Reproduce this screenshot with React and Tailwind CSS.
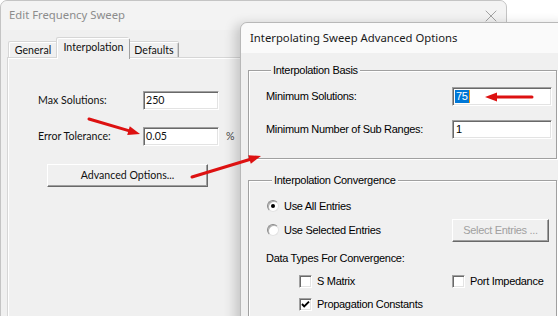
import React from "react";
import { X } from "lucide-react";

const sunken =
    "bg-white border border-t-[#a0a0a0] border-l-[#a0a0a0] border-b-white border-r-white shadow-[inset_1px_1px_0_#696969,inset_-1px_-1px_0_#e3e3e3]";
const raised =
    "bg-[#f0f0f0] border border-t-white border-l-white border-b-[#696969] border-r-[#696969] shadow-[inset_-1px_-1px_0_#a0a0a0]";

const arrows = [
    { x1: 89, y1: 119, x2: 140, y2: 134 },
    { x1: 192, y1: 177, x2: 261, y2: 156 },
    { x1: 532, y1: 97, x2: 485, y2: 97 },
];

const Arrow = ({ x1, y1, x2, y2 }) => {
    const len = Math.hypot(x2 - x1, y2 - y1);
    const ux = (x2 - x1) / len;
    const uy = (y2 - y1) / len;
    const head = 12;
    const half = 4.5;
    const bx = x2 - ux * head;
    const by = y2 - uy * head;
    const pts = `${x2},${y2} ${bx - uy * half},${by + ux * half} ${bx + uy * half},${by - ux * half}`;
    return (
        <g>
            <line x1={x1} y1={y1} x2={bx + ux} y2={by + uy} stroke="#dd1111" strokeWidth="3" strokeLinecap="round" />
            <polygon points={pts} fill="#dd1111" />
        </g>
    );
};

const Checkbox = ({ checked, label }) => (
    <div className="flex items-center gap-[5px]">
        <div className={`w-[13px] h-[13px] ${sunken} flex items-center justify-center`}>
            {checked && (
                <svg width="9" height="9" viewBox="0 0 9 9">
                    <polyline points="1,4 3.2,6.4 8,1.6" fill="none" stroke="#000" strokeWidth="1.9" />
                </svg>
            )}
        </div>
        <span>{label}</span>
    </div>
);

const Radio = ({ checked, label }) => (
    <div className="flex items-center gap-[5px]">
        <div className="w-[12px] h-[12px] rounded-full bg-white border border-t-[#8a8a8a] border-l-[#8a8a8a] border-b-[#e3e3e3] border-r-[#e3e3e3] shadow-[inset_1px_1px_0_#b0b0b0] flex items-center justify-center">
            {checked && <div className="w-[4px] h-[4px] rounded-full bg-black" />}
        </div>
        <span>{label}</span>
    </div>
);

const GroupBox = ({ title, className, children }) => (
    <fieldset
        className={`border border-[#a0a0a0] shadow-[inset_1px_1px_0_#fff,1px_1px_0_#fff] ${className}`}
    >
        <legend className="ml-[5px] px-[2px] leading-[13px] bg-[#f0f0f0]">{title}</legend>
        {children}
    </fieldset>
);

export default function App() {
    return (
        <div className="relative w-[558px] h-[316px] overflow-hidden bg-white">
            {/* Edit Frequency Sweep */}
            <div className="absolute left-0 top-0 w-[507px] h-[340px] rounded-t-[7px] border border-[#c4c4c4] bg-[#f0f0f0] flex flex-col font-['Lato',sans-serif] text-[10.6px] text-[#111]">
                <div className="h-[29px] shrink-0 flex items-center justify-between pl-[8px] pr-[5px] bg-[#f3f3f3] rounded-t-[7px]">
                    <span className="text-[#8c8c8c] font-['Noto_Sans',sans-serif] text-[11.3px]">Edit Frequency Sweep</span>
                    <X size={20} strokeWidth={1.1} color="#9a9a9a" />
                </div>
                <div className="flex items-end h-[20px] mt-[8px] pl-[8px] shrink-0">
                    <div className="h-[16px] w-[48px] flex items-center justify-center border-t border-l border-white border-r border-r-[#a0a0a0] rounded-tl-[2px] shadow-[-1px_-1px_0_#d6d6d6]">
                        General
                    </div>
                    <div className="relative z-10 h-[21px] -mb-[1px] w-[73px] pb-[3px] flex items-center justify-center bg-[#f0f0f0] border-t border-l border-white border-r border-r-[#a0a0a0] rounded-t-[2px] shadow-[-1px_-1px_0_#d6d6d6]">
                        Interpolation
                    </div>
                    <div className="h-[16px] w-[49px] flex items-center justify-center border-t border-white border-r border-r-[#a0a0a0] shadow-[inset_-1px_0_0_#d0d0d0,0_-1px_0_#d6d6d6] rounded-tr-[2px]">
                        Defaults
                    </div>
                </div>
                <div className="ml-[7px] mr-[8px] flex-1 border-t border-l border-white shadow-[-1px_-1px_0_#d6d6d6] pl-[29px] pt-[32px] flex flex-col">
                    <div className="flex items-center h-[19px]">
                        <span className="w-[105px]">Max Solutions:</span>
                        <div className={`w-[76px] h-[19px] ${sunken} flex items-center pl-[2px]`}>250</div>
                    </div>
                    <div className="flex items-center h-[19px] mt-[17px]">
                        <span className="w-[105px]">Error Tolerance:</span>
                        <div className={`w-[76px] h-[19px] ${sunken} flex items-center pl-[2px]`}>0.05</div>
                        <span className="ml-[7px] text-[#444]">%</span>
                    </div>
                    <button
                        className={`mt-[18px] ml-[9px] w-[161px] h-[23px] ${raised} flex items-center justify-center`}
                    >
                        Advanced Options...
                    </button>
                </div>
            </div>

            {/* Interpolating Sweep Advanced Options */}
            <div className="absolute left-[240px] top-[22px] w-[330px] h-[310px] rounded-tl-[7px] border border-[#b8b8b8] bg-[#f0f0f0] shadow-[-5px_2px_12px_rgba(0,0,0,0.18)] flex flex-col">
                <div className="h-[30px] shrink-0 flex items-center pl-[9px] bg-[#fafafa] rounded-tl-[7px] font-['Noto_Sans',sans-serif] text-[11.3px] text-[#1a1a1a]">
                    Interpolating Sweep Advanced Options
                </div>
                <div className="pl-[7px] pt-[11px] flex flex-col font-['Liberation_Sans',Arial,sans-serif] text-[11px] tracking-[-0.3px] text-black">
                    <GroupBox title="Interpolation Basis" className="w-[309px] pl-[17px] pt-[10px] pb-[19px]">
                        <div className="flex items-center h-[19px]">
                            <span className="w-[186px]">Minimum Solutions:</span>
                            <div className={`w-[100px] h-[19px] ${sunken} flex items-center pl-[2px]`}>
                                <span className="bg-[#0078d7] text-white px-[1px] leading-[13px] border-r border-[#f7a21b]">75</span>
                            </div>
                        </div>
                        <div className="flex items-center h-[19px] mt-[14px]">
                            <span className="w-[186px]">Minimum Number of Sub Ranges:</span>
                            <div className={`w-[100px] h-[19px] ${sunken} flex items-center pl-[3px]`}>1</div>
                        </div>
                    </GroupBox>
                    <GroupBox title="Interpolation Convergence" className="mt-[15px] w-[309px] pl-[18px] pt-[7px] pb-[10px]">
                        <div className="flex items-center h-[24px]">
                            <Radio checked label="Use All Entries" />
                        </div>
                        <div className="flex items-center h-[24px]">
                            <div className="w-[185px]">
                                <Radio label="Use Selected Entries" />
                            </div>
                            <button
                                className={`w-[97px] h-[23px] ${raised} flex items-center justify-center text-[#a0a0a0]`}
                            >
                                Select Entries ...
                            </button>
                        </div>
                        <div className="flex items-center h-[24px] mt-[4px] -ml-[1px]">Data Types For Convergence:</div>
                        <div className="flex items-center h-[23px] pl-[32px]">
                            <div className="w-[153px]">
                                <Checkbox label="S Matrix" />
                            </div>
                            <Checkbox label="Port Impedance" />
                        </div>
                        <div className="flex items-center h-[23px] pl-[32px]">
                            <Checkbox checked label="Propagation Constants" />
                        </div>
                    </GroupBox>
                </div>
            </div>

            {/* annotation arrows */}
            <svg className="absolute inset-0 pointer-events-none" width="558" height="316">
                {arrows.map((a, i) => (
                    <Arrow key={i} {...a} />
                ))}
            </svg>
        </div>
    );
}
